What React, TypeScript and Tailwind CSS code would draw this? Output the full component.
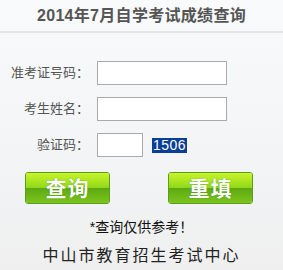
import React from "react";

const font = { fontFamily: '"Liberation Sans", "Noto Sans CJK SC", sans-serif' };

function GreenButton({ label }: { label: string }) {
  return (
    <button className="relative w-[85px] h-[32px] rounded-[3px] border border-[#5a9e1c] overflow-hidden flex items-center justify-center">
      <div className="absolute inset-0 flex flex-col">
        <div className="h-1/2 bg-gradient-to-b from-[#c8f52a] to-[#8fd817]" />
        <div className="h-1/2 bg-gradient-to-b from-[#5ca812] to-[#7cc51e]" />
      </div>
      <span className="relative text-white text-[21px] font-bold leading-none tracking-[1px] [text-shadow:0_0_1px_#3a7a10]">
        {label}
      </span>
    </button>
  );
}

export default function App() {
  return (
    <div
      className="w-[283px] h-[270px] bg-gradient-to-b from-[#f8fafc] via-[#f3f5f7] to-[#efefef] overflow-hidden"
      style={font}
    >
      <div className="h-[33px] flex items-center justify-center border-b-2 border-[#e2e4e6]">
        <h1 className="text-[16px] font-bold text-[#555555] leading-none pt-[1px] tracking-[0.3px]">
          2014年7月自学考试成绩查询
        </h1>
      </div>
      <div className="pt-[28px] flex flex-col gap-[12px]">
        <div className="flex items-center h-[24px]">
          <span className="w-[97px] pr-[8px] text-right text-[13px] text-[#555]">准考证号码：</span>
          <input className="w-[130px] h-[24px] bg-white border border-[#aaaaaa] outline-none" />
        </div>
        <div className="flex items-center h-[24px]">
          <span className="w-[97px] pr-[8px] text-right text-[13px] text-[#555]">考生姓名：</span>
          <input className="w-[130px] h-[24px] bg-white border border-[#aaaaaa] outline-none" />
        </div>
        <div className="flex items-center h-[24px]">
          <span className="w-[97px] pr-[8px] text-right text-[13px] text-[#555]">验证码：</span>
          <input className="w-[46px] h-[24px] bg-white border border-[#aaaaaa] outline-none" />
          <span className="ml-[9px] bg-[#0b3f97] text-white text-[14px] leading-[15px] px-[1px] tracking-[0.5px]">
            1506
          </span>
        </div>
      </div>
      <div className="mt-[15px] flex pl-[25px] gap-[58px]">
        <GreenButton label="查询" />
        <GreenButton label="重填" />
      </div>
      <div className="mt-[15px] text-center text-[14px] text-[#111] leading-[16px]">*查询仅供参考！</div>
      <div className="mt-[12px] text-center text-[16px] text-[#222] leading-[18px] tracking-[2px]">
        中山市教育招生考试中心
      </div>
    </div>
  );
}
